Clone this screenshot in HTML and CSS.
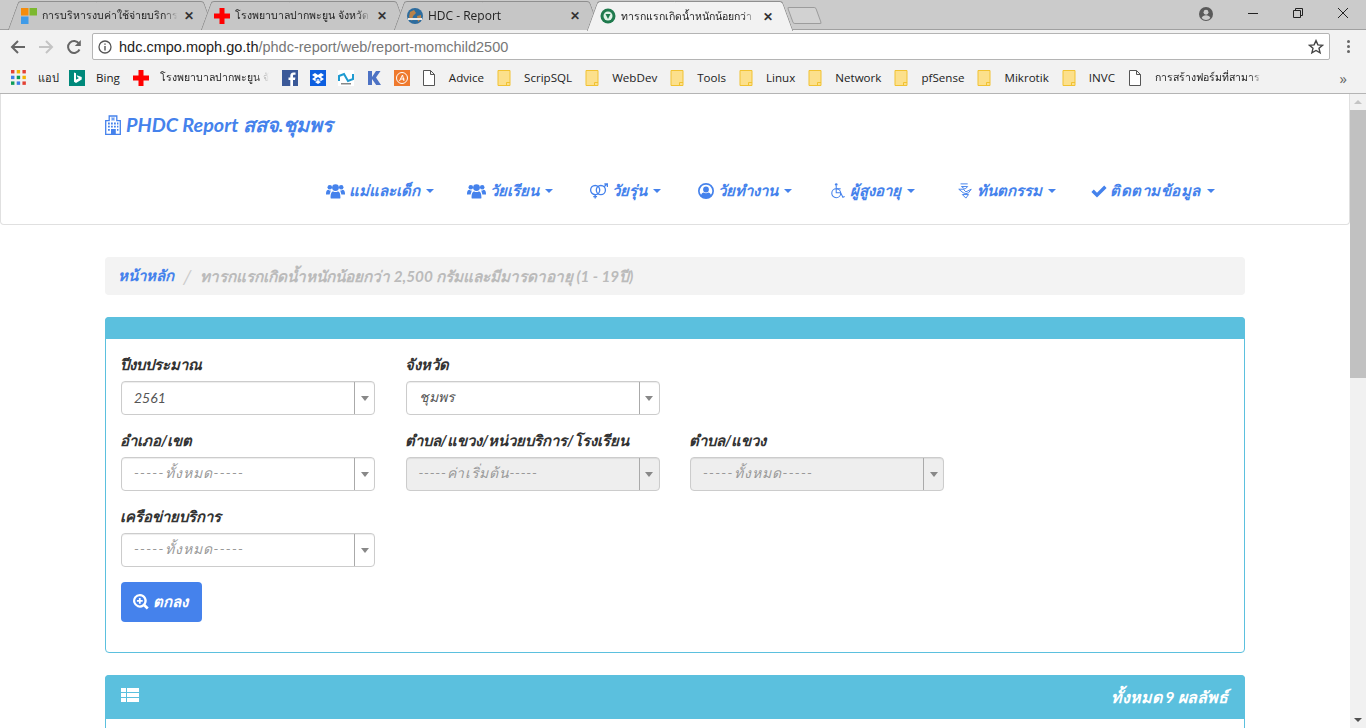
FILE: index.html
```html
<!DOCTYPE html>
<html lang="th">
<head>
    <meta charset="utf-8">
    <title>ทารกแรกเกิดน้ำหนักน้อยกว่า 2,500 กรัม</title>
    <link rel="stylesheet" href="styles.css">
</head>
<body>
    <svg class="sprite" width="0" height="0">
        <symbol id="i-users" viewBox="0 0 20 16"><circle cx="4" cy="4" r="2.4"/><circle cx="16" cy="4" r="2.4"/><circle cx="10" cy="4.4" r="3.6"/><path d="M0 11c0-3 1-4.400 2.600-4.400 .8 .6 1.400 1 2.400 1L3.800 11.600H0zM20 11c0-3-1-4.400-2.600-4.400-.8 .6-1.400 1-2.400 1l1.200 4H20z"/><path d="M4.800 15c0-4 .8-6.600 2.800-6.600 1.500 1 3.300 1 4.800 0 2 0 2.800 2.600 2.800 6.600 0 .6-.6 1-1.200 1H6c-.6 0-1.200-.4-1.200-1z"/></symbol>
        <symbol id="i-venus" viewBox="0 0 20 16"><g fill="none" stroke="currentColor" stroke-width="1.400"><circle cx="6.500" cy="7" r="4.800"/><circle cx="12.500" cy="7" r="4.800"/><path d="M6.500 12v4M4.500 14h4M16 3.500l3-3M16.200 .6H19.400V3.800"/></g></symbol>
        <symbol id="i-user" viewBox="0 0 16 16"><path fill-rule="evenodd" d="M8 0a8 8 0 1 0 0 16A8 8 0 0 0 8 0zm0 1.800a6.200 6.200 0 0 1 4.900 10c-.7-1.500-1.700-2.300-2.600-2.300-.7 .5-1.400 .8-2.300 .8s-1.600-.3-2.300-.8c-.9 0-1.900 .8-2.600 2.300A6.200 6.200 0 0 1 8 1.800zM8 3.600a2.900 2.900 0 1 0 0 5.800 2.900 2.900 0 0 0 0-5.800z"/></symbol>
        <symbol id="i-wheel" viewBox="0 0 16 18"><g fill="none" stroke="currentColor" stroke-width="1.200"><circle cx="6" cy="11.500" r="5"/><path d="M6 3v8h5l2.500 5 2-.8"/><path d="M6 6.500h5"/></g><circle cx="6" cy="1.700" r="1.500"/></symbol>
        <symbol id="i-medkit" viewBox="0 0 16 18"><g fill="none" stroke="currentColor" stroke-width="1.100"><path d="M3 1h8M4 4h7l-3 3zM1 7h5l3 3 6-3-3 4-3 1-3-1zM5 13h7l-3 4z"/></g></symbol>
        <symbol id="i-check" viewBox="0 0 16 14"><path d="M6 13.500L.4 7.900l2.400-2.400L6 8.700 13.200 1.500l2.400 2.400z"/></symbol>
        <symbol id="i-hospital" viewBox="0 0 16 20"><path fill="none" stroke="currentColor" stroke-width="1.300" d="M.7 19.300V5.700h3.500V1h7.600v4.700h3.500v13.600z"/><path d="M6.600 2.200h.9v1.300h1V2.200h.9v3.600h-.9V4.400h-1v1.400h-.9zM3 7.600h1.800v1.800H3zM6 7.600h1.800v1.800H6zM9 7.600h1.800v1.800H9zM12 7.600h1.400v1.800H12zM3 10.800h1.800v1.800H3zM6 10.800h1.800v1.800H6zM9 10.800h1.800v1.800H9zM12 10.800h1.400v1.800H12zM3 14h1.800v1.800H3zM12 14h1.400v1.800H12zM6 14h4.800v5H6z"/></symbol>
        <symbol id="i-folder" viewBox="0 0 13 16"><path fill="#fce08c" stroke="#f1c232" d="M.5 .5h8l4 0v15H.5z"/><path fill="none" stroke="#f1c232" d="M9 15.500v-3h3.500"/></symbol>
        <symbol id="i-doc" viewBox="0 0 12 16"><path fill="#fff" stroke="#555" d="M.5 .5h7l4 4v11H.5zM7.500 .5v4h4"/></symbol>
        <symbol id="i-cross" viewBox="0 0 16 16"><path fill="#f00" d="M5.500 0h5v5.500H16v5h-5.500V16h-5v-5.500H0v-5h5.500z"/></symbol>
    </svg>

    <div class="tabstrip">
        <div class="tab">
            <svg class="favicon" viewBox="0 0 16 16"><path fill="#f48c0d" d="M0 0h7.500v7.500H0z"/><path fill="#7cb82f" d="M8.500 0H16v7.500H8.500z"/><path fill="#3f9be8" d="M0 8.500h7.500V16H0z"/></svg>
            <span class="tab-title">การบริหารงบค่าใช้จ่ายบริการ</span>
            <span class="tab-close">✕</span>
        </div>
        <div class="tab">
            <svg class="favicon"><use href="#i-cross"/></svg>
            <span class="tab-title">โรงพยาบาลปากพะยูน จังหวัด</span>
            <span class="tab-close">✕</span>
        </div>
        <div class="tab">
            <svg class="favicon" viewBox="0 0 16 16"><circle cx="8" cy="8" r="8" fill="#2d6c9e"/><path fill="#b9824a" d="M3 4l4-2 2 3-3 3-1 5-3-4zM10 8l4-1 0 4-3 3z"/><path fill="#e8e8e8" d="M1 10h14v2H1z"/></svg>
            <span class="tab-title tab-latin">HDC - Report</span>
            <span class="tab-close">✕</span>
        </div>
        <div class="tab active">
            <svg class="favicon" viewBox="0 0 16 16"><circle cx="8" cy="8" r="7.500" fill="#1f7a4d"/><circle cx="8" cy="8" r="4.500" fill="#dff2e6"/><path fill="#1f7a4d" d="M5.500 6h5L8 11z"/></svg>
            <span class="tab-title">ทารกแรกเกิดน้ำหนักน้อยกว่า</span>
            <span class="tab-close">✕</span>
        </div>
        <div class="newtab"></div>
        <div class="window-btns">
            <svg class="win-avatar" viewBox="0 0 16 16"><circle cx="8" cy="8" r="8" fill="#5a5a5a"/><circle cx="8" cy="6" r="2.800" fill="#cbcbcb"/><path fill="#cbcbcb" d="M3 12.500c.8-2 2.600-3 5-3s4.200 1 5 3A6.500 6.500 0 0 1 3 12.500z"/></svg>
            <svg class="win-btn" viewBox="0 0 12 12"><path stroke="#222" d="M1 6.500h10"/></svg>
            <svg class="win-btn" viewBox="0 0 12 12"><path fill="none" stroke="#222" d="M1.500 3.500h7v7h-7zM3.500 3.500v-2h7v7h-2"/></svg>
            <svg class="win-btn" viewBox="0 0 12 12"><path stroke="#222" d="M1 1l10 10M11 1L1 11"/></svg>
        </div>
    </div>

    <div class="toolbar">
        <svg class="nav-ico" viewBox="0 0 16 16"><path fill="none" stroke="#666" stroke-width="2" d="M15 8H2M8 2L2 8l6 6"/></svg>
        <svg class="nav-ico" viewBox="0 0 16 16"><path fill="none" stroke="#c4c4c4" stroke-width="2" d="M1 8h13M8 2l6 6-6 6"/></svg>
        <svg class="nav-ico" viewBox="0 0 16 16"><path fill="none" stroke="#666" stroke-width="2" d="M13.500 10.500A6 6 0 1 1 13 4.500"/><path fill="#666" d="M14.800 1v6h-6z"/></svg>
        <div class="omnibox">
            <svg class="omni-info" viewBox="0 0 14 14"><circle cx="7" cy="7" r="6" fill="none" stroke="#555" stroke-width="1.300"/><path fill="#555" d="M6.300 6h1.400v4.500H6.300zM6.300 3.400h1.400v1.400H6.300z"/></svg>
            <span class="url"><b>hdc.cmpo.moph.go.th</b>/phdc-report/web/report-momchild2500</span>
            <svg class="omni-star" viewBox="0 0 16 16"><path fill="none" stroke="#444" stroke-width="1.400" d="M8 1.600l1.900 4.300 4.600 .4-3.500 3 1.100 4.600L8 11.500l-4.100 2.400L5 9.300l-3.500-3 4.600-.4z"/></svg>
        </div>
        <div class="menu-dots"><i></i><i></i><i></i></div>
    </div>

    <div class="bookmarks">
        <a class="bm bm-apps"><svg class="bm-ico" viewBox="0 0 14 14"><g><path fill="#e34234" d="M0 0h3v3H0z"/><path fill="#f4b400" d="M5 0h3v3H5z"/><path fill="#e34234" d="M10 0h3v3h-3z"/><path fill="#3f7fe8" d="M0 5h3v3H0z"/><path fill="#0f9d58" d="M5 5h3v3H5z"/><path fill="#f4b400" d="M10 5h3v3h-3z"/><path fill="#0f9d58" d="M0 10h3v3H0z"/><path fill="#3f7fe8" d="M5 10h3v3H5z"/><path fill="#e34234" d="M10 10h3v3h-3z"/></g></svg>แอป</a>
        <a class="bm"><svg class="bm-ico" viewBox="0 0 16 16"><path fill="#00897b" d="M0 0h16v16H0z"/><path fill="#fff" d="M5 2.500l2 .7v6.500l3-1.700-1.500-.7-.8-2 5 1.800v2.500L7 13 5 11.800z"/></svg>Bing</a>
        <a class="bm bm-wide"><svg class="bm-ico"><use href="#i-cross"/></svg><span class="bm-fade">โรงพยาบาลปากพะยูน จั</span></a>
        <a class="bm bm-only"><svg class="bm-ico" viewBox="0 0 16 16"><path fill="#3b5998" d="M0 0h16v16H0z"/><path fill="#fff" d="M11 16v-6h2l.4-2.500H11V6c0-.8.3-1.200 1.200-1.200h1.300V2.500h-2C9.300 2.500 8.300 3.800 8.300 5.700v1.800H6.500V10h1.800v6z"/></svg></a>
        <a class="bm bm-only"><svg class="bm-ico" viewBox="0 0 16 16"><path fill="#0d5fe0" d="M0 0h16v16H0z"/><path fill="#fff" d="M5 3L2 5l3 2-3 2 3 2 3-2 3 2 3-2-3-2 3-2-3-2-3 2zM8 7l3 2-3 2-3-2zM5 12l3 2 3-2-3-1.500z"/></svg></a>
        <a class="bm bm-only"><svg class="bm-ico" viewBox="0 0 16 16"><path fill="#fff" d="M0 0h16v16H0z"/><path fill="none" stroke="#1f9bd1" stroke-width="2" d="M1 11V6l5-2 4 7 5-2V4"/><path fill="#888" d="M3 13h10v1.500H3z"/></svg></a>
        <a class="bm bm-only"><svg class="bm-ico" viewBox="0 0 16 16"><path fill="#4d72c4" d="M2 1h4v6l4-6h4.500L10 7.500 15 15h-4.800L6 9v6H2z"/></svg></a>
        <a class="bm bm-only"><svg class="bm-ico" viewBox="0 0 16 16"><path fill="#ef7a2e" d="M0 0h16v16H0z"/><circle cx="8" cy="8" r="5.500" fill="none" stroke="#fff"/><path fill="none" stroke="#fff" d="M5.500 11L8.500 5l1.500 6M6.500 9h4"/></svg></a>
        <a class="bm"><svg class="bm-ico bm-doc"><use href="#i-doc"/></svg>Advice</a>
        <a class="bm"><svg class="bm-ico bm-fold"><use href="#i-folder"/></svg>ScripSQL</a>
        <a class="bm"><svg class="bm-ico bm-fold"><use href="#i-folder"/></svg>WebDev</a>
        <a class="bm"><svg class="bm-ico bm-fold"><use href="#i-folder"/></svg>Tools</a>
        <a class="bm"><svg class="bm-ico bm-fold"><use href="#i-folder"/></svg>Linux</a>
        <a class="bm"><svg class="bm-ico bm-fold"><use href="#i-folder"/></svg>Network</a>
        <a class="bm"><svg class="bm-ico bm-fold"><use href="#i-folder"/></svg>pfSense</a>
        <a class="bm"><svg class="bm-ico bm-fold"><use href="#i-folder"/></svg>Mikrotik</a>
        <a class="bm"><svg class="bm-ico bm-fold"><use href="#i-folder"/></svg>INVC</a>
        <a class="bm bm-wide"><svg class="bm-ico bm-doc"><use href="#i-doc"/></svg><span class="bm-fade">การสร้างฟอร์มที่สามาร</span></a>
        <span class="bm-more">»</span>
    </div>

    <div class="viewport">
        <div class="page">
            <nav class="navbar">
                <a class="brand"><svg class="brand-ico"><use href="#i-hospital"/></svg>PHDC Report สสจ.ชุมพร</a>
                <ul class="menu">
                    <li><svg class="ico ico-users"><use href="#i-users"/></svg>แม่และเด็ก<i class="caret"></i></li>
                    <li><svg class="ico ico-users"><use href="#i-users"/></svg>วัยเรียน<i class="caret"></i></li>
                    <li><svg class="ico ico-users"><use href="#i-venus"/></svg>วัยรุ่น<i class="caret"></i></li>
                    <li><svg class="ico"><use href="#i-user"/></svg>วัยทำงาน<i class="caret"></i></li>
                    <li><svg class="ico"><use href="#i-wheel"/></svg>ผู้สูงอายุ<i class="caret"></i></li>
                    <li><svg class="ico"><use href="#i-medkit"/></svg>ทันตกรรม<i class="caret"></i></li>
                    <li><svg class="ico"><use href="#i-check"/></svg>ติดตามข้อมูล<i class="caret"></i></li>
                </ul>
            </nav>

            <div class="container">
                <ol class="breadcrumb">
                    <li><a>หน้าหลัก</a></li>
                    <li class="sep">/</li>
                    <li class="crumb-current">ทารกแรกเกิดน้ำหนักน้อยกว่า 2,500 กรัมและมีมารดาอายุ (1 - 19ปี)</li>
                </ol>

                <section class="panel">
                    <div class="panel-heading heading-thin"></div>
                    <div class="panel-body">
                        <div class="form-grid">
                            <div class="field">
                                <label>ปีงบประมาณ</label>
                                <div class="select"><span class="value">2561</span><span class="arrow"></span></div>
                            </div>
                            <div class="field">
                                <label>จังหวัด</label>
                                <div class="select"><span class="value">ชุมพร</span><span class="arrow"></span></div>
                            </div>
                            <div class="field"></div>
                            <div class="field">
                                <label>อำเภอ/เขต</label>
                                <div class="select"><span class="value placeholder ph-all">-----ทั้งหมด-----</span><span class="arrow"></span></div>
                            </div>
                            <div class="field">
                                <label>ตำบล/แขวง/หน่วยบริการ/โรงเรียน</label>
                                <div class="select disabled"><span class="value placeholder">-----ค่าเริ่มต้น-----</span><span class="arrow"></span></div>
                            </div>
                            <div class="field">
                                <label>ตำบล/แขวง</label>
                                <div class="select disabled"><span class="value placeholder ph-all">-----ทั้งหมด-----</span><span class="arrow"></span></div>
                            </div>
                            <div class="field">
                                <label>เครือข่ายบริการ</label>
                                <div class="select"><span class="value placeholder ph-all">-----ทั้งหมด-----</span><span class="arrow"></span></div>
                            </div>
                        </div>
                        <button class="btn" type="button">
                            <svg class="btn-ico" viewBox="0 0 16 16"><path fill="#fff" fill-rule="evenodd" d="M6.800 0a6.800 6.800 0 1 0 3.900 12.400l3.100 3.100 1.900-1.900-3.100-3.100A6.800 6.800 0 0 0 6.800 0zm0 2.200a4.600 4.600 0 1 1 0 9.200 4.600 4.600 0 0 1 0-9.200zM5.900 3.900v2H3.900v1.800h2v2h1.800v-2h2V5.900h-2v-2z"/></svg>ตกลง
                        </button>
                    </div>
                </section>

                <section class="panel">
                    <div class="panel-heading heading-result">
                        <svg class="list-ico" viewBox="0 0 18 14"><path fill="#fff" d="M0 0h5v4H0zM6 0h12v4H6zM0 5h5v4H0zM6 5h12v4H6zM0 10h5v4H0zM6 10h12v4H6z"/></svg>
                        <span class="result-count">ทั้งหมด 9 ผลลัพธ์</span>
                    </div>
                    <div class="panel-body"></div>
                </section>
            </div>
        </div>
        <div class="scrollbar">
            <span class="sb-up"></span>
            <span class="sb-thumb"></span>
            <span class="sb-down"></span>
        </div>
    </div>
</body>
</html>
```

FILE: styles.css
```css
html, body {
    margin: 0;
    height: 728px;
    overflow: hidden;
    background: #fff;
}

body {
    font-family: "Open Sans", "Noto Sans", sans-serif;
    display: flex;
    flex-direction: column;
}

.sprite {
    position: absolute;
}

/* tab strip */
.tabstrip {
    height: 30px;
    flex: none;
    display: flex;
    background: #cbcbcb;
    padding: 1px 0 0 15px;
    box-sizing: border-box;
    border-bottom: 1px solid #a0a0a0;
}

.tab {
    position: relative;
    isolation: isolate;
    width: 194px;
    height: 29px;
    margin-right: -1px;
    padding: 0 9px 0 6px;
    box-sizing: border-box;
    display: flex;
    align-items: center;
    font-size: 10.5px;
    color: #222;
}

.tab::before,
.tab::after {
    content: "";
    position: absolute;
    z-index: -1;
    top: 0;
    bottom: 0;
    width: 55%;
    background: #c6c6c6;
    border-top: 1px solid #8f8f8f;
}

.tab::before {
    left: -2px;
    transform: skewX(-20deg);
    border-left: 1px solid #8f8f8f;
    border-radius: 3px 0 0 0;
}

.tab::after {
    right: 0;
    transform: skewX(20deg);
    border-right: 1px solid #8f8f8f;
    border-radius: 0 3px 0 0;
}

.tab.active {
    height: 30px;
    z-index: 2;
}

.tab.active::before,
.tab.active::after {
    background: #f2f2f2;
}

.favicon {
    width: 16px;
    height: 16px;
    flex: none;
    margin-right: 5px;
}

.tab-title {
    flex: 1;
    min-width: 0;
    overflow: hidden;
    white-space: nowrap;
    -webkit-mask-image: linear-gradient(to left, transparent, #000 14px);
    mask-image: linear-gradient(to left, transparent, #000 14px);
}

.tab-latin {
    font-size: 12px;
}

.tab-close {
    flex: none;
    width: 22px;
    text-align: center;
    font-size: 12px;
    font-weight: 700;
    color: #333;
}

.newtab {
    width: 27px;
    height: 15px;
    margin: 6px 0 0 3px;
    background: #d2d2d2;
    border: 1px solid #9c9c9c;
    border-radius: 2px;
    transform: skewX(20deg);
}

.window-btns {
    margin-left: auto;
    display: flex;
    align-items: flex-start;
    padding-top: 5px;
    padding-right: 17px;
}

.win-avatar {
    width: 14px;
    height: 14px;
    margin-right: 34px;
    margin-top: 1px;
}

.win-btn {
    width: 12px;
    height: 12px;
    margin-left: 33px;
    margin-top: 1px;
}

.win-avatar + .win-btn {
    margin-left: 0;
}

/* address bar */
.toolbar {
    height: 33px;
    flex: none;
    display: flex;
    align-items: center;
    background: #f2f2f2;
    padding-left: 10px;
    box-sizing: border-box;
}

.nav-ico {
    width: 16px;
    height: 16px;
    margin-right: 12px;
}

.omnibox {
    width: 1238px;
    height: 27px;
    margin-left: -2px;
    box-sizing: border-box;
    display: flex;
    align-items: center;
    background: #fff;
    border: 1px solid #b4b4b4;
    border-radius: 2px;
    padding: 0 5px;
}

.omni-info {
    width: 14px;
    height: 14px;
    margin-right: 7px;
}

.url {
    flex: 1;
    font-family: "Liberation Sans", sans-serif;
    font-size: 14.5px;
    color: #777;
}

.url b {
    font-weight: 400;
    color: #222;
}

.omni-star {
    width: 16px;
    height: 16px;
}

.menu-dots {
    width: 36px;
    display: flex;
    flex-direction: column;
    align-items: center;
    gap: 2px;
}

.menu-dots i {
    width: 3px;
    height: 3px;
    background: #666;
    border-radius: 50%;
}

/* bookmarks */
.bookmarks {
    height: 31px;
    flex: none;
    display: flex;
    align-items: center;
    gap: 13px;
    padding: 0 19px 1px 11px;
    box-sizing: border-box;
    background: #f2f2f2;
    border-bottom: 1px solid #b4b4b4;
    font-size: 11.6px;
    color: #222;
}

.bm {
    display: flex;
    align-items: center;
    gap: 11px;
    white-space: nowrap;
}

.bm-apps {
    font-size: 11px;
    margin-right: -3px;
}

.bm-only {
    margin-right: -1px;
}

.bm-ico {
    width: 16px;
    height: 16px;
    flex: none;
}

.bm-doc,
.bm-fold {
    width: 14px;
    margin-right: 2px;
}

.bm-wide .bm-fade {
    display: block;
    width: 109px;
    font-size: 10.5px;
    overflow: hidden;
    -webkit-mask-image: linear-gradient(to left, transparent, #000 14px);
    mask-image: linear-gradient(to left, transparent, #000 14px);
}

.bm-more {
    margin-left: auto;
    font-size: 15px;
    color: #666;
}

/* page */
.viewport {
    flex: 1;
    min-height: 0;
    display: flex;
}

.page {
    flex: 1;
    min-width: 0;
    overflow: hidden;
    font-family: "Lato", "Noto Sans", sans-serif;
    font-style: italic;
    color: #333;
    font-size: 14px;
}

.navbar {
    height: 131px;
    box-sizing: border-box;
    border: 1px solid #e0e0e0;
    border-top: 0;
    border-radius: 0 0 4px 4px;
    padding: 0 104px 0 104px;
}

.brand {
    display: flex;
    align-items: center;
    gap: 5px;
    height: 62px;
    font-size: 19.8px;
    font-weight: 700;
    color: #4582ec;
}

.brand-ico {
    width: 16px;
    height: 20px;
    fill: #4582ec;
    color: #4582ec;
}

.menu {
    list-style: none;
    margin: 18px 35px 0 0;
    padding: 0;
    display: flex;
    justify-content: flex-end;
    font-size: 15px;
    font-weight: 700;
    color: #4582ec;
}

.menu li {
    display: flex;
    align-items: center;
    height: 34px;
    box-sizing: border-box;
    white-space: nowrap;
}

/* each entry has its own fixed slot on the bar */
.menu li:nth-child(1) { width: 141px; }
.menu li:nth-child(2) { width: 122px; }
.menu li:nth-child(3) { width: 109px; }
.menu li:nth-child(4) { width: 132px; }
.menu li:nth-child(5) { width: 127px; }
.menu li:nth-child(6) { width: 134px; }
.menu li:nth-child(7) { width: 119px; letter-spacing: .5px; }

.menu li:nth-child(7) .ico {
    margin-right: 3px;
}

.ico {
    width: 16px;
    height: 16px;
    margin-right: 4px;
    flex: none;
    fill: #4582ec;
    color: #4582ec;
}

.ico-users {
    width: 19px;
}

.caret {
    flex: none;
    width: 0;
    height: 0;
    margin-left: 6px;
    border-top: 4px solid #4582ec;
    border-left: 4px solid transparent;
    border-right: 4px solid transparent;
}

.container {
    width: 1140px;
    margin: 0 auto;
    padding-top: 32px;
}

.breadcrumb {
    list-style: none;
    margin: 0 0 22px;
    height: 38px;
    padding: 0 13px;
    box-sizing: border-box;
    display: flex;
    align-items: center;
    gap: 9px;
    background: #f3f3f3;
    border-radius: 4px;
    font-size: 15px;
    font-weight: 700;
    color: #bbb;
}

.breadcrumb a {
    color: #4582ec;
}

.sep {
    color: #ccc;
    font-size: 20px;
    font-weight: 400;
}

.crumb-current {
    font-size: 15.3px;
}

.panel {
    border: 1px solid #5bc0de;
    border-radius: 4px;
    margin-bottom: 22px;
}

.panel-heading {
    background: #5bc0de;
    margin: -1px -1px 0;
    border-radius: 4px 4px 0 0;
}

.heading-thin {
    height: 22px;
}

.heading-result {
    height: 44px;
    display: flex;
    align-items: center;
    justify-content: space-between;
    padding: 0 17px 0 16px;
    color: #fff;
    font-size: 16px;
    font-weight: 700;
}

.list-ico {
    width: 18px;
    height: 14px;
    margin-bottom: 5px;
}

.panel-body {
    padding: 16px 15px 30px 15px;
}

.form-grid {
    display: grid;
    grid-template-columns: repeat(3, 284.5px);
}

.field {
    height: 76px;
    box-sizing: border-box;
}

.field label {
    display: block;
    height: 26px;
    margin-left: -1px;
    line-height: 18px;
    font-size: 14.9px;
    font-weight: 700;
    color: #333;
    white-space: nowrap;
}

.select {
    width: 254px;
    height: 34px;
    box-sizing: border-box;
    display: flex;
    align-items: center;
    background: #fff;
    border: 1px solid #ccc;
    border-radius: 4px;
    box-shadow: inset 0 1px 1px rgba(0,0,0,0.075);
}

.select.disabled {
    background: #eee;
}

.value {
    flex: 1;
    padding: 0 0 2px 12px;
    font-size: 14px;
    color: #555;
}

.value.placeholder {
    color: #999;
    letter-spacing: .7px;
}

.value.ph-all {
    letter-spacing: 1.2px;
}

.arrow {
    width: 20px;
    height: 100%;
    box-sizing: border-box;
    border-left: 1px solid #aaa;
    display: flex;
    align-items: center;
    justify-content: center;
}

.arrow::after {
    content: "";
    border-top: 5px solid #888;
    border-left: 4px solid transparent;
    border-right: 4px solid transparent;
}

.btn {
    display: flex;
    align-items: center;
    gap: 4px;
    height: 40px;
    width: 81px;
    margin: -1px 0 0;
    padding: 0 12px;
    border: 0;
    border-radius: 4px;
    background: #4582ec;
    color: #fff;
    font: italic 700 15px "Lato", "Noto Sans", sans-serif;
}

.btn-ico {
    width: 16px;
    height: 16px;
}

/* scrollbar */
.scrollbar {
    width: 16px;
    flex: none;
    display: flex;
    flex-direction: column;
    align-items: center;
    background: #f1f1f1;
}

.sb-up,
.sb-down {
    flex: none;
    width: 0;
    height: 0;
    margin: 6px 0;
    border-left: 4px solid transparent;
    border-right: 4px solid transparent;
}

.sb-up {
    border-bottom: 4px solid #c4c4c4;
}

.sb-down {
    margin-top: auto;
    border-top: 4px solid #505050;
}

.sb-thumb {
    width: 100%;
    height: 268px;
    background: #c1c1c1;
}
```
